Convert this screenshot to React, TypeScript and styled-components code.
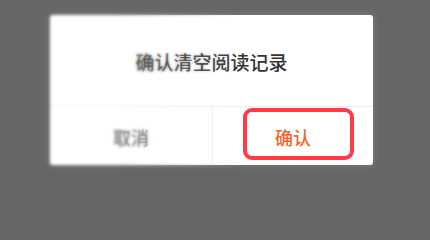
import React from "react";
import styled, { createGlobalStyle } from "styled-components";

const GlobalStyle = createGlobalStyle`
  html, body {
    margin: 0;
    padding: 0;
    background: #666666;
  }
  body {
    font-family: "Noto Sans CJK SC", "Noto Sans", sans-serif;
  }
`;

const Screen = styled.div`
  position: relative;
  width: 430px;
  height: 205px;
  overflow: hidden;
  background: #666666;
  padding: 15px 0 0 50px;
  box-sizing: border-box;
`;

const Dialog = styled.div`
  width: 323px;
  height: 150px;
  background: #ffffff;
  border-radius: 3px;
  box-shadow: 0 0 6px 1px rgba(255, 255, 255, 0.14);
  display: grid;
  grid-template-rows: 92px 1fr;
  overflow: hidden;
`;

const Title = styled.div`
  display: flex;
  align-items: center;
  justify-content: center;
  font-size: 19px;
  font-weight: 500;
  color: #333333;
  padding-top: 1px;
  border-bottom: 1px solid #eeeeee;
`;

const Actions = styled.div`
  display: grid;
  grid-template-columns: 162px 1fr;
`;

const Action = styled.div<{ $primary?: boolean }>`
  position: relative;
  display: flex;
  align-items: center;
  justify-content: center;
  font-size: 18px;
  font-weight: 500;
  color: ${(p) => (p.$primary ? "#f0652b" : "#777777")};
  border-left: ${(p) => (p.$primary ? "1px solid #eeeeee" : "none")};
  padding-top: 1px;
`;

const Highlight = styled.div`
  position: absolute;
  left: 30px;
  right: 19px;
  top: 1px;
  bottom: 5px;
  border: 4px solid #ff3b45;
  border-radius: 9px;
  box-sizing: border-box;
`;

const EdgeGlow = styled.div`
  position: absolute;
  left: 50px;
  top: 15px;
  width: 170px;
  height: 150px;
  border-radius: 3px;
  box-shadow: -2px 0 9px 3px rgba(255, 255, 255, 0.7);
  mask-image: linear-gradient(to right, #000 0%, #000 35%, transparent 100%);
  -webkit-mask-image: linear-gradient(to right, #000 0%, #000 35%, transparent 100%);
`;

const BlurVeil = styled.div`
  position: absolute;
  left: 0;
  top: 2px;
  width: 260px;
  height: 178px;
  backdrop-filter: blur(1.8px);
  -webkit-backdrop-filter: blur(1.8px);
  mask-image: linear-gradient(to right, #000 0%, #000 45%, transparent 92%);
  -webkit-mask-image: linear-gradient(to right, #000 0%, #000 45%, transparent 92%);
`;

export default function App() {
  return (
    <>
      <GlobalStyle />
      <Screen>
        <Dialog>
          <Title>确认清空阅读记录</Title>
          <Actions>
            <Action>取消</Action>
            <Action $primary>
              确认
              <Highlight />
            </Action>
          </Actions>
        </Dialog>
        <EdgeGlow />
        <BlurVeil />
      </Screen>
    </>
  );
}
